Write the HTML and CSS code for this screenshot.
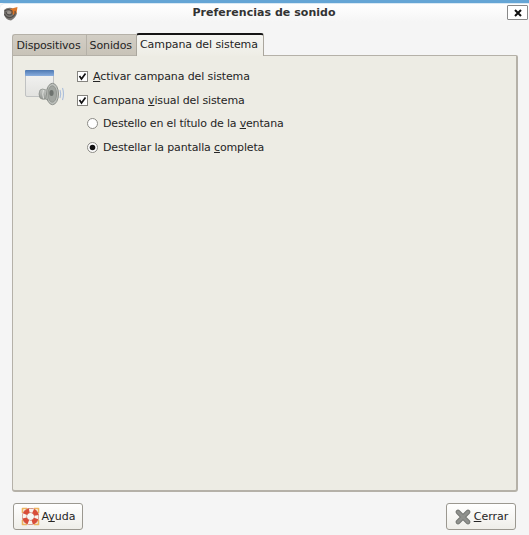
FILE: index.html
```
<!DOCTYPE html>
<html lang="es">
<head>
<meta charset="utf-8">
<title>Preferencias de sonido</title>
<link rel="stylesheet" href="styles.css">
</head>
<body>
<div class="window">
  <header class="titlebar">
    <svg class="app-icon" width="16" height="17" viewBox="0 0 16 17">
      <path d="M1 5Q4 2 9 3L14 8Q13 13 8 15.500Q3 15 1 10Z" fill="#7b7773"/>
      <path d="M7 4L14.500 2L13.500 8L10.500 10L8 7Z" fill="#dc7628"/>
      <path d="M2 6Q5 3 9 6Q10 10 6 10Q3 9 3 7M1.500 9Q4 14 9 12Q13 10 12 6" fill="none" stroke="#4e4b48" stroke-width="1.1"/>
      <ellipse cx="6" cy="7.500" rx="2" ry="1.500" fill="#9c9690"/>
    </svg>
    <h1 class="title">Preferencias de sonido</h1>
    <button class="close" aria-label="Cerrar ventana"><svg width="8" height="8" viewBox="0 0 8 8"><path d="M1 1L7 7M7 1L1 7" stroke="#111" stroke-width="2"/></svg></button>
  </header>
  <nav class="tabs">
    <div class="tab devices"><span>Dispositivos</span></div>
    <div class="tab sounds"><span>Sonidos</span></div>
    <div class="tab active"><span>Campana del sistema</span></div>
  </nav>
  <main class="panel">
    <svg class="bell-icon" width="42" height="38" viewBox="0 0 42 38">
      <defs>
        <linearGradient id="bar" x2="0" y2="1"><stop stop-color="#4d78b2"/><stop offset="1" stop-color="#8aaede"/></linearGradient>
        <linearGradient id="pane" x2="0" y2="1"><stop stop-color="#f4f4f3"/><stop offset="1" stop-color="#e2e2df"/></linearGradient>
        <linearGradient id="metal" x2="0" y2="1"><stop stop-color="#dee0dc"/><stop offset=".5" stop-color="#afb2ae"/><stop offset="1" stop-color="#7c807b"/></linearGradient>
      </defs>
      <rect x="1.5" y="1.5" width="28" height="26" rx="1.5" fill="url(#pane)" stroke="#c0c2c2"/>
      <path d="M1 7V2Q1 1 2 1H29Q30 1 30 2V7Z" fill="url(#bar)"/>
      <path d="M16 21Q18 19 22 21L28 14V35L22 30Q18 31 16 29Q14 25 16 21Z" fill="url(#metal)" stroke="#858985" stroke-width=".7"/>
      <path d="M19.5 21Q18 25 19.5 29.5M23 20Q21.5 25 23 30" fill="none" stroke="#e0e2de"/>
      <ellipse cx="28.5" cy="25" rx="6" ry="10.7" fill="#c0c3bf" stroke="#8b8f8a"/>
      <ellipse cx="28.3" cy="25" rx="4.3" ry="8.3" fill="#a2a6a1" stroke="#858a84" stroke-width=".7"/>
      <ellipse cx="27.5" cy="24" rx="2.1" ry="3" fill="#6d726e"/>
      <path d="M36 21Q37.500 25 36 29M38.500 19Q40.500 25 38.500 31" fill="none" stroke="#abbedb" stroke-width="1.1"/>
    </svg>
    <div class="options">
      <label class="option"><svg class="mark" width="11" height="11" viewBox="0 0 11 11"><rect x=".5" y=".5" width="10" height="10" fill="#fff" stroke="#85847f"/><path d="M2.5 5L4.5 8L8.5 2.5" fill="none" stroke="#111" stroke-width="1.7"/></svg><span class="text activate"><u>A</u>ctivar campana del sistema</span></label>
      <label class="option"><svg class="mark" width="11" height="11" viewBox="0 0 11 11"><rect x=".5" y=".5" width="10" height="10" fill="#fff" stroke="#85847f"/><path d="M2.5 5L4.5 8L8.5 2.5" fill="none" stroke="#111" stroke-width="1.7"/></svg><span class="text visual">Campana <u>v</u>isual del sistema</span></label>
      <label class="option nested"><svg class="mark" width="11" height="11" viewBox="0 0 11 11"><circle cx="5.5" cy="5.5" r="5" fill="#fff" stroke="#8b8a85"/></svg><span class="text flash">Destello en el título de la <u>v</u>entana</span></label>
      <label class="option nested"><svg class="mark" width="11" height="11" viewBox="0 0 11 11"><circle cx="5.5" cy="5.5" r="5" fill="#fff" stroke="#8b8a85"/><circle cx="5.5" cy="5.5" r="2.8" fill="#111"/></svg><span class="text full">Destellar la pantalla <u>c</u>ompleta</span></label>
    </div>
  </main>
  <footer class="actions">
    <button class="button"><svg class="help-icon" width="19" height="19" viewBox="0 0 19 19">
      <path d="M1.5 6V1.5H6M13 1.5H17.5V6M17.5 13V17.5H13M6 17.5H1.5V13" fill="none" stroke="#edb45e" stroke-width="1.6" stroke-linejoin="round"/>
      <circle cx="9.5" cy="9.5" r="6" fill="none" stroke="#b8503f" stroke-width="5"/>
      <circle cx="9.5" cy="9.5" r="6" fill="none" stroke="#f8f3ed" stroke-width="4.2"/>
      <circle cx="9.5" cy="9.5" r="6" fill="none" stroke="#d84d38" stroke-width="4.4" stroke-dasharray="5.4 4.025" stroke-dashoffset="-2"/>
    </svg><span>A<u>y</u>uda</span></button>
    <button class="button dismiss"><svg class="cancel-icon" width="16" height="16" viewBox="0 0 16 16"><path d="M3 3L13 13M13 3L3 13" stroke="#737571" stroke-width="4.6" stroke-linecap="round"/><path d="M3 3L13 13M13 3L3 13" stroke="#8f918d" stroke-width="3" stroke-linecap="round"/></svg><span><u>C</u>errar</span></button>
  </footer>
</div>
</body>
</html>
```
FILE: styles.css
```
* { box-sizing: border-box; }
body {
  margin: 0;
  background: #5d9bcc;
  font: 11px/14px "DejaVu Sans", sans-serif;
  color: #252525;
}
.window {
  width: 529px;
  height: 535px;
  display: flex;
  flex-direction: column;
  border-top: 3px solid #65a5d5;
  background: #f5f5f5;
}
.titlebar {
  height: 30px;
  display: flex;
  align-items: flex-start;
  padding: 2px 1px 0 3px;
  border-top: 1px solid #d9e9f4;
  border-radius: 5px 0 0 0;
  background: linear-gradient(#fff, #f5f5f5 18px);
}
.app-icon { margin-top: -1px; }
.title { flex: 1; margin: 0 0 0 2px; text-align: center; font-size: 11px; line-height: 14px; letter-spacing: .04px; color: #333; white-space: nowrap; }
.close { width: 21px; height: 15px; margin-top: -1px; padding: 0; display: flex; align-items: center; justify-content: center; border: 1px solid #888; border-radius: 1px; background: #fff; }
.tabs { position: relative; z-index: 1; display: flex; align-items: flex-end; height: 23px; padding-left: 12px; white-space: nowrap; }
.tab { height: 22px; padding: 4px 0 0 3.5px; border: 1px solid #b5b1a8; border-right: 0; background: linear-gradient(#d2cec5, #c8c3b8); }
.devices { width: 74px; border-radius: 3px 0 0 0; letter-spacing: -.18px; }
.sounds { width: 50px; padding-left: 2.5px; letter-spacing: -.1px; }
.active { width: 128px; height: 23px; padding: 2px 0 0 3px; border: 1px solid #aaa69d; border-top: 2px solid #151515; border-bottom: 0; border-radius: 3px 3px 0 0; background: linear-gradient(#f5f5f2, #eeede5); letter-spacing: -.08px; }
.active span { display: block; padding-top: 1px; }
.panel { display: flex; height: 437px; margin: -1px 11px 0 12px; padding: 13px 0 0 11px; border: 1px solid #b5b1a8; border-bottom-width: 2px; border-right-width: 2px; border-radius: 0 2px 3px 3px; background: #edece4; }
.bell-icon { flex: none; }
.options { padding: 1px 0 0 11px; }
.option { height: 23.5px; display: flex; align-items: flex-start; white-space: nowrap; }
.mark { margin-top: 1px; }
.text { margin-left: 5px; }
.activate { letter-spacing: -.11px; }
.visual { letter-spacing: -.13px; }
.flash { letter-spacing: -.17px; }
.full { letter-spacing: -.15px; }
.nested { padding-left: 10px; }
u { text-decoration-thickness: 1px; text-underline-offset: 1px; text-decoration-skip-ink: none; }
.actions { display: flex; justify-content: space-between; margin: 11px 13px 0 13px; }
.button { width: 70px; height: 27px; display: flex; align-items: center; justify-content: center; padding: 0; gap: 2px; font: inherit; color: inherit; white-space: nowrap; border: 1px solid #9b9890; border-radius: 3px; background: linear-gradient(#fff, #efeee9); }
.dismiss { gap: 3px; padding-left: 1px; }
```
